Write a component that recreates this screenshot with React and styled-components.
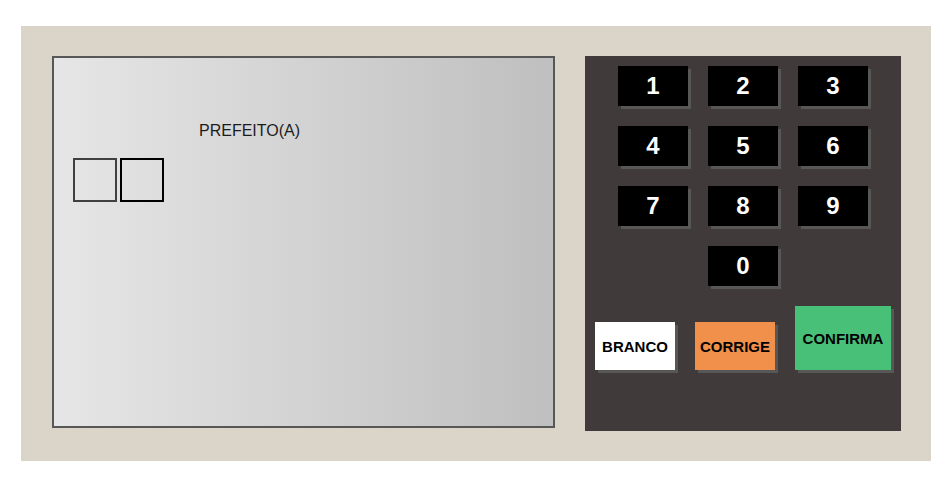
import React from 'react'
import styled, { createGlobalStyle } from 'styled-components'

const GlobalStyle = createGlobalStyle`
  html, body {
    margin: 0;
    padding: 0;
    background: #ffffff;
    font-family: "Liberation Sans", Arial, sans-serif;
  }
`

// Urna body
const Urna = styled.div`
  margin: 26px 0 0 21px;
  width: 910px;
  height: 435px;
  box-sizing: border-box;
  padding: 30px 30px 0 31px;
  background: #dbd4c9;
  display: flex;
  align-items: flex-start;
  gap: 30px;
`

const Screen = styled.div`
  width: 503px;
  height: 372px;
  box-sizing: border-box;
  border: 2px solid #575757;
  background: linear-gradient(to right, #e6e6e6, #bfbfbf);
  padding: 64px 0 0 19px;
  display: flex;
  flex-direction: column;
`

const Role = styled.div`
  margin-left: 126px;
  font-size: 16px;
  line-height: 18px;
  color: #1c1c1c;
`

const Digits = styled.div`
  display: flex;
  gap: 3px;
  margin-top: 18px;
`

const DigitBox = styled.div`
  width: 44px;
  height: 44px;
  box-sizing: border-box;
  border: 2px solid ${(p) => (p.$active ? '#000000' : '#404040')};
`

const Keypad = styled.div`
  width: 316px;
  height: 375px;
  box-sizing: border-box;
  background: #403a3a;
  padding: 10px 10px 0;
  display: flex;
  flex-direction: column;
  gap: 20px;
`

const Grid = styled.div`
  display: grid;
  grid-template-columns: repeat(3, 70px);
  grid-auto-rows: 40px;
  gap: 20px;
  justify-content: center;
`

const Key = styled.div`
  grid-column: ${(p) => p.$col || 'auto'};
  background: #000000;
  color: #ffffff;
  font-weight: bold;
  font-size: 24px;
  display: flex;
  align-items: center;
  justify-content: center;
  box-shadow: 3px 3px 0 #575757;
`

const Actions = styled.div`
  display: flex;
  align-items: flex-end;
  gap: 20px;
`

const Action = styled.div`
  width: ${(p) => p.$w}px;
  height: ${(p) => p.$h}px;
  background: ${(p) => p.$bg};
  color: #000000;
  font-weight: bold;
  font-size: 15px;
  display: flex;
  align-items: center;
  justify-content: center;
  box-shadow: 3px 3px 0 #575757;
`

const keys = ['1', '2', '3', '4', '5', '6', '7', '8', '9']

export default function App() {
  return (
    <>
      <GlobalStyle />
      <Urna>
        <Screen>
          <Role>PREFEITO(A)</Role>
          <Digits>
            <DigitBox />
            <DigitBox $active />
          </Digits>
        </Screen>
        <Keypad>
          <Grid>
            {keys.map((k) => (
              <Key key={k}>{k}</Key>
            ))}
            <Key $col="2">0</Key>
          </Grid>
          <Actions>
            <Action $w={80} $h={48} $bg="#ffffff">BRANCO</Action>
            <Action $w={80} $h={48} $bg="#f0904a">CORRIGE</Action>
            <Action $w={96} $h={64} $bg="#48c078">CONFIRMA</Action>
          </Actions>
        </Keypad>
      </Urna>
    </>
  )
}
